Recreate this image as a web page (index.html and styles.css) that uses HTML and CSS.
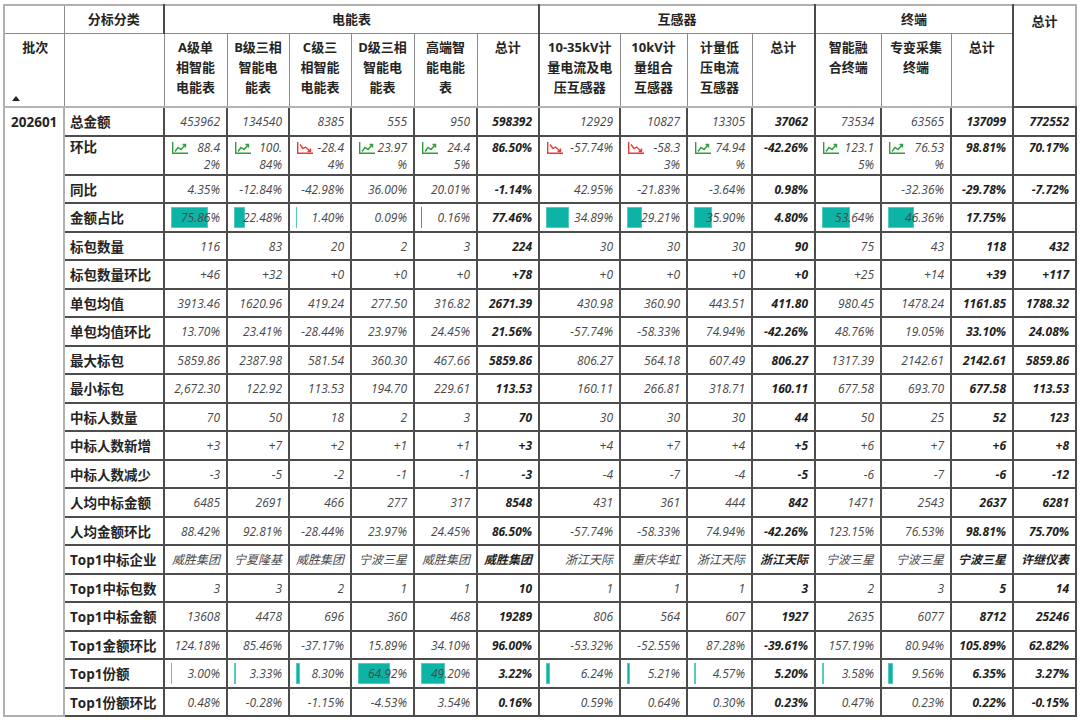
FILE: index.html
```html
<!DOCTYPE html>
<html lang="zh-CN">
<head>
<meta charset="utf-8">
<title>分标分类矩阵</title>
<link rel="stylesheet" href="styles.css">
</head>
<body>
<table class="matrix">
<colgroup>
<col class="w60"><col class="w100"><col class="w63"><col class="w62"><col class="w62"><col class="w63"><col class="w63"><col class="w62"><col class="w81"><col class="w67"><col class="w65"><col class="w63"><col class="w66"><col class="w70"><col class="w62"><col class="w63">
</colgroup>
<thead>
<tr class="h1">
<th class="blank"></th>
<th class="grp">分标分类</th>
<th class="grp gs" colspan="6">电能表</th>
<th class="grp gs" colspan="4">互感器</th>
<th class="grp gs" colspan="3">终端</th>
<th class="grand gs" rowspan="2">总计</th>
</tr>
<tr class="h2">
<th class="batch-head"><div class="batch-inner"><span>批次</span><span class="sort"></span></div></th>
<th class="blank"></th>
<th>A级单<br>相智能<br>电能表</th>
<th>B级三相<br>智能电<br>能表</th>
<th>C级三<br>相智能<br>电能表</th>
<th>D级三相<br>智能电<br>能表</th>
<th>高端智<br>能电能<br>表</th>
<th>总计</th>
<th class="gs">10-35kV计<br>量电流及电<br>压互感器</th>
<th>10kV计<br>量组合<br>互感器</th>
<th>计量低<br>压电流<br>互感器</th>
<th>总计</th>
<th class="gs">智能融<br>合终端</th>
<th>专变采集<br>终端</th>
<th>总计</th>
</tr>
</thead>
<tbody>
<tr class="r">
<td class="batch" rowspan="21">202601</td>
<td class="lab">总金额</td>
<td>453962</td><td>134540</td><td>8385</td><td>555</td><td>950</td><td class="t">598392</td>
<td>12929</td><td>10827</td><td>13305</td><td class="t">37062</td>
<td>73534</td><td>63565</td><td class="t">137099</td><td class="t">772552</td>
</tr>
<tr class="r tall">
<td class="lab">环比</td>
<td><svg class="trend up" viewBox="0 0 16 12" width="16" height="12"><path d="M0.7 0V11.3H16"/><path d="M3 9.5L6 5.5L9 7.5L13.5 2.5M10.5 2.5H13.5V5.5"/></svg><span>88.4<br>2%</span></td>
<td><svg class="trend up" viewBox="0 0 16 12" width="16" height="12"><path d="M0.7 0V11.3H16"/><path d="M3 9.5L6 5.5L9 7.5L13.5 2.5M10.5 2.5H13.5V5.5"/></svg><span>100.<br>84%</span></td>
<td><svg class="trend down" viewBox="0 0 16 12" width="16" height="12"><path d="M0.7 0V11.3H16"/><path d="M3 2.5L6 6.5L8.5 5L13.5 9.5M13.5 6.5V9.5H10.5"/></svg><span>-28.4<br>4%</span></td>
<td><svg class="trend up" viewBox="0 0 16 12" width="16" height="12"><path d="M0.7 0V11.3H16"/><path d="M3 9.5L6 5.5L9 7.5L13.5 2.5M10.5 2.5H13.5V5.5"/></svg><span>23.97<br>%</span></td>
<td><svg class="trend up" viewBox="0 0 16 12" width="16" height="12"><path d="M0.7 0V11.3H16"/><path d="M3 9.5L6 5.5L9 7.5L13.5 2.5M10.5 2.5H13.5V5.5"/></svg><span>24.4<br>5%</span></td>
<td class="t">86.50%</td>
<td><svg class="trend down" viewBox="0 0 16 12" width="16" height="12"><path d="M0.7 0V11.3H16"/><path d="M3 2.5L6 6.5L8.5 5L13.5 9.5M13.5 6.5V9.5H10.5"/></svg><span>-57.74%</span></td>
<td><svg class="trend down" viewBox="0 0 16 12" width="16" height="12"><path d="M0.7 0V11.3H16"/><path d="M3 2.5L6 6.5L8.5 5L13.5 9.5M13.5 6.5V9.5H10.5"/></svg><span>-58.3<br>3%</span></td>
<td><svg class="trend up" viewBox="0 0 16 12" width="16" height="12"><path d="M0.7 0V11.3H16"/><path d="M3 9.5L6 5.5L9 7.5L13.5 2.5M10.5 2.5H13.5V5.5"/></svg><span>74.94<br>%</span></td>
<td class="t">-42.26%</td>
<td><svg class="trend up" viewBox="0 0 16 12" width="16" height="12"><path d="M0.7 0V11.3H16"/><path d="M3 9.5L6 5.5L9 7.5L13.5 2.5M10.5 2.5H13.5V5.5"/></svg><span>123.1<br>5%</span></td>
<td><svg class="trend up" viewBox="0 0 16 12" width="16" height="12"><path d="M0.7 0V11.3H16"/><path d="M3 9.5L6 5.5L9 7.5L13.5 2.5M10.5 2.5H13.5V5.5"/></svg><span>76.53<br>%</span></td>
<td class="t">98.81%</td><td class="t">70.17%</td>
</tr>
<tr class="r">
<td class="lab">同比</td>
<td>4.35%</td><td>-12.84%</td><td>-42.98%</td><td>36.00%</td><td>20.01%</td><td class="t">-1.14%</td>
<td>42.95%</td><td>-21.83%</td><td>-3.64%</td><td class="t">0.98%</td>
<td></td><td>-32.36%</td><td class="t">-29.78%</td><td class="t">-7.72%</td>
</tr>
<tr class="r">
<td class="lab">金额占比</td>
<td class="bar"><div class="barwrap"><span class="fill" style="width:75.86%"></span><span class="val">75.86%</span></div></td>
<td class="bar"><div class="barwrap"><span class="fill" style="width:22.48%"></span><span class="val">22.48%</span></div></td>
<td class="bar"><div class="barwrap"><span class="fill" style="width:1.40%"></span><span class="val">1.40%</span></div></td>
<td class="bar"><div class="barwrap"><span class="fill" style="width:0.09%"></span><span class="val">0.09%</span></div></td>
<td class="bar"><div class="barwrap"><span class="fill" style="width:0.16%"></span><span class="val">0.16%</span></div></td>
<td class="t">77.46%</td>
<td class="bar"><div class="barwrap"><span class="fill" style="width:34.89%"></span><span class="val">34.89%</span></div></td>
<td class="bar"><div class="barwrap"><span class="fill" style="width:29.21%"></span><span class="val">29.21%</span></div></td>
<td class="bar"><div class="barwrap"><span class="fill" style="width:35.90%"></span><span class="val">35.90%</span></div></td>
<td class="t">4.80%</td>
<td class="bar"><div class="barwrap"><span class="fill" style="width:53.64%"></span><span class="val">53.64%</span></div></td>
<td class="bar"><div class="barwrap"><span class="fill" style="width:46.36%"></span><span class="val">46.36%</span></div></td>
<td class="t">17.75%</td><td class="t"></td>
</tr>
<tr class="r">
<td class="lab">标包数量</td>
<td>116</td><td>83</td><td>20</td><td>2</td><td>3</td><td class="t">224</td>
<td>30</td><td>30</td><td>30</td><td class="t">90</td>
<td>75</td><td>43</td><td class="t">118</td><td class="t">432</td>
</tr>
<tr class="r">
<td class="lab">标包数量环比</td>
<td>+46</td><td>+32</td><td>+0</td><td>+0</td><td>+0</td><td class="t">+78</td>
<td>+0</td><td>+0</td><td>+0</td><td class="t">+0</td>
<td>+25</td><td>+14</td><td class="t">+39</td><td class="t">+117</td>
</tr>
<tr class="r">
<td class="lab">单包均值</td>
<td>3913.46</td><td>1620.96</td><td>419.24</td><td>277.50</td><td>316.82</td><td class="t">2671.39</td>
<td>430.98</td><td>360.90</td><td>443.51</td><td class="t">411.80</td>
<td>980.45</td><td>1478.24</td><td class="t">1161.85</td><td class="t">1788.32</td>
</tr>
<tr class="r">
<td class="lab">单包均值环比</td>
<td>13.70%</td><td>23.41%</td><td>-28.44%</td><td>23.97%</td><td>24.45%</td><td class="t">21.56%</td>
<td>-57.74%</td><td>-58.33%</td><td>74.94%</td><td class="t">-42.26%</td>
<td>48.76%</td><td>19.05%</td><td class="t">33.10%</td><td class="t">24.08%</td>
</tr>
<tr class="r">
<td class="lab">最大标包</td>
<td>5859.86</td><td>2387.98</td><td>581.54</td><td>360.30</td><td>467.66</td><td class="t">5859.86</td>
<td>806.27</td><td>564.18</td><td>607.49</td><td class="t">806.27</td>
<td>1317.39</td><td>2142.61</td><td class="t">2142.61</td><td class="t">5859.86</td>
</tr>
<tr class="r">
<td class="lab">最小标包</td>
<td>2,672.30</td><td>122.92</td><td>113.53</td><td>194.70</td><td>229.61</td><td class="t">113.53</td>
<td>160.11</td><td>266.81</td><td>318.71</td><td class="t">160.11</td>
<td>677.58</td><td>693.70</td><td class="t">677.58</td><td class="t">113.53</td>
</tr>
<tr class="r">
<td class="lab">中标人数量</td>
<td>70</td><td>50</td><td>18</td><td>2</td><td>3</td><td class="t">70</td>
<td>30</td><td>30</td><td>30</td><td class="t">44</td>
<td>50</td><td>25</td><td class="t">52</td><td class="t">123</td>
</tr>
<tr class="r">
<td class="lab">中标人数新增</td>
<td>+3</td><td>+7</td><td>+2</td><td>+1</td><td>+1</td><td class="t">+3</td>
<td>+4</td><td>+7</td><td>+4</td><td class="t">+5</td>
<td>+6</td><td>+7</td><td class="t">+6</td><td class="t">+8</td>
</tr>
<tr class="r">
<td class="lab">中标人数减少</td>
<td>-3</td><td>-5</td><td>-2</td><td>-1</td><td>-1</td><td class="t">-3</td>
<td>-4</td><td>-7</td><td>-4</td><td class="t">-5</td>
<td>-6</td><td>-7</td><td class="t">-6</td><td class="t">-12</td>
</tr>
<tr class="r">
<td class="lab">人均中标金额</td>
<td>6485</td><td>2691</td><td>466</td><td>277</td><td>317</td><td class="t">8548</td>
<td>431</td><td>361</td><td>444</td><td class="t">842</td>
<td>1471</td><td>2543</td><td class="t">2637</td><td class="t">6281</td>
</tr>
<tr class="r">
<td class="lab">人均金额环比</td>
<td>88.42%</td><td>92.81%</td><td>-28.44%</td><td>23.97%</td><td>24.45%</td><td class="t">86.50%</td>
<td>-57.74%</td><td>-58.33%</td><td>74.94%</td><td class="t">-42.26%</td>
<td>123.15%</td><td>76.53%</td><td class="t">98.81%</td><td class="t">75.70%</td>
</tr>
<tr class="r">
<td class="lab">Top1中标企业</td>
<td>威胜集团</td><td>宁夏隆基</td><td>威胜集团</td><td>宁波三星</td><td>威胜集团</td><td class="t">威胜集团</td>
<td>浙江天际</td><td>重庆华虹</td><td>浙江天际</td><td class="t">浙江天际</td>
<td>宁波三星</td><td>宁波三星</td><td class="t">宁波三星</td><td class="t">许继仪表</td>
</tr>
<tr class="r">
<td class="lab">Top1中标包数</td>
<td>3</td><td>3</td><td>2</td><td>1</td><td>1</td><td class="t">10</td>
<td>1</td><td>1</td><td>1</td><td class="t">3</td>
<td>2</td><td>3</td><td class="t">5</td><td class="t">14</td>
</tr>
<tr class="r">
<td class="lab">Top1中标金额</td>
<td>13608</td><td>4478</td><td>696</td><td>360</td><td>468</td><td class="t">19289</td>
<td>806</td><td>564</td><td>607</td><td class="t">1927</td>
<td>2635</td><td>6077</td><td class="t">8712</td><td class="t">25246</td>
</tr>
<tr class="r">
<td class="lab">Top1金额环比</td>
<td>124.18%</td><td>85.46%</td><td>-37.17%</td><td>15.89%</td><td>34.10%</td><td class="t">96.00%</td>
<td>-53.32%</td><td>-52.55%</td><td>87.28%</td><td class="t">-39.61%</td>
<td>157.19%</td><td>80.94%</td><td class="t">105.89%</td><td class="t">62.82%</td>
</tr>
<tr class="r">
<td class="lab">Top1份额</td>
<td class="bar"><div class="barwrap"><span class="fill" style="width:3.00%"></span><span class="val">3.00%</span></div></td>
<td class="bar"><div class="barwrap"><span class="fill" style="width:3.33%"></span><span class="val">3.33%</span></div></td>
<td class="bar"><div class="barwrap"><span class="fill" style="width:8.30%"></span><span class="val">8.30%</span></div></td>
<td class="bar"><div class="barwrap"><span class="fill" style="width:64.92%"></span><span class="val">64.92%</span></div></td>
<td class="bar"><div class="barwrap"><span class="fill" style="width:49.20%"></span><span class="val">49.20%</span></div></td>
<td class="t">3.22%</td>
<td class="bar"><div class="barwrap"><span class="fill" style="width:6.24%"></span><span class="val">6.24%</span></div></td>
<td class="bar"><div class="barwrap"><span class="fill" style="width:5.21%"></span><span class="val">5.21%</span></div></td>
<td class="bar"><div class="barwrap"><span class="fill" style="width:4.57%"></span><span class="val">4.57%</span></div></td>
<td class="t">5.20%</td>
<td class="bar"><div class="barwrap"><span class="fill" style="width:3.58%"></span><span class="val">3.58%</span></div></td>
<td class="bar"><div class="barwrap"><span class="fill" style="width:9.56%"></span><span class="val">9.56%</span></div></td>
<td class="t">6.35%</td><td class="t">3.27%</td>
</tr>
<tr class="r">
<td class="lab">Top1份额环比</td>
<td>0.48%</td><td>-0.28%</td><td>-1.15%</td><td>-4.53%</td><td>3.54%</td><td class="t">0.16%</td>
<td>0.59%</td><td>0.64%</td><td>0.30%</td><td class="t">0.23%</td>
<td>0.47%</td><td>0.23%</td><td class="t">0.22%</td><td class="t">-0.15%</td>
</tr>
</tbody>
</table>
</body>
</html>
```

FILE: styles.css
```css
html, body {
  margin: 0;
  padding: 0;
  background: #ffffff;
}

body {
  font-family: "Open Sans", "Noto Sans CJK SC", sans-serif;
  color: #252423;
  padding: 4px 0 0 3px;
}

.matrix {
  border-collapse: collapse;
  table-layout: fixed;
  width: 1072px;
  border: 2px solid #b0b0b0;
}

.w60 { width: 60px; }
.w62 { width: 62px; }
.w63 { width: 63px; }
.w65 { width: 65px; }
.w66 { width: 66px; }
.w67 { width: 67px; }
.w70 { width: 70px; }
.w81 { width: 81px; }
.w100 { width: 100px; }

.matrix th {
  font-size: 13px;
  font-weight: 700;
  line-height: 20px;
  color: #252423;
  text-align: center;
  vertical-align: top;
  white-space: nowrap;
  padding: 3px 2px 0;
  border: 1px solid #8a8a8a;
}

.matrix .h1 {
  height: 28px;
}

.matrix .h1 th {
  vertical-align: middle;
  padding-top: 0;
}

.matrix .h1 th.grand {
  vertical-align: top;
  padding-top: 5px;
}

.matrix .h2 {
  height: 74px;
}

.matrix .h2 th {
  border-bottom: 2px solid #b4b4b4;
}

.matrix th.gs {
  border-left: 2px solid #4a4a4a;
}

.matrix th.blank {
  padding: 0;
}

.batch-head {
  padding: 3px 4px 5px 6px !important;
}

.batch-inner {
  display: flex;
  flex-direction: column;
  justify-content: space-between;
  align-items: center;
  height: 64px;
}

.sort {
  align-self: flex-start;
  margin-left: 1px;
  width: 0;
  height: 0;
  border-left: 4px solid transparent;
  border-right: 4px solid transparent;
  border-bottom: 5px solid #252423;
}

.matrix .r {
  height: 28.5px;
}

.matrix .r.tall {
  height: 39px;
}

.matrix td {
  font-size: 12px;
  font-style: italic;
  line-height: 20px;
  color: #474747;
  text-align: right;
  vertical-align: top;
  white-space: nowrap;
  padding: 4px 6px 0;
  border: 2px solid #4d4d4d;
}

.matrix tr.tall td {
  padding-top: 2px;
  line-height: 17.5px;
}

.matrix td.batch {
  font-size: 13.5px;
  font-style: normal;
  font-weight: 700;
  color: #252423;
  text-align: left;
  padding: 4px 6px 0;
  border: 2px solid #b0b0b0;
}

.matrix td.lab {
  font-size: 13.5px;
  font-style: normal;
  font-weight: 700;
  color: #252423;
  text-align: left;
  padding-left: 5px;
}

.matrix td.t {
  font-weight: 700;
  color: #1e1e1e;
}

.trend {
  float: left;
  margin-top: 3px;
  margin-left: 1px;
  fill: none;
  stroke-width: 1.4;
  stroke-linejoin: miter;
}

.trend.up {
  stroke: #2f9e3a;
}

.trend.down {
  stroke: #ee3a36;
}

.matrix td.bar {
  padding-top: 3px;
}

.barwrap {
  display: grid;
  align-items: center;
  height: 21px;
}

.fill,
.val {
  grid-area: 1 / 1;
}

.fill {
  justify-self: start;
  height: 21px;
  background: #0db4a5;
  box-shadow: inset 0 0 0 1px #53cbc0;
}

.val {
  text-align: right;
}
```
